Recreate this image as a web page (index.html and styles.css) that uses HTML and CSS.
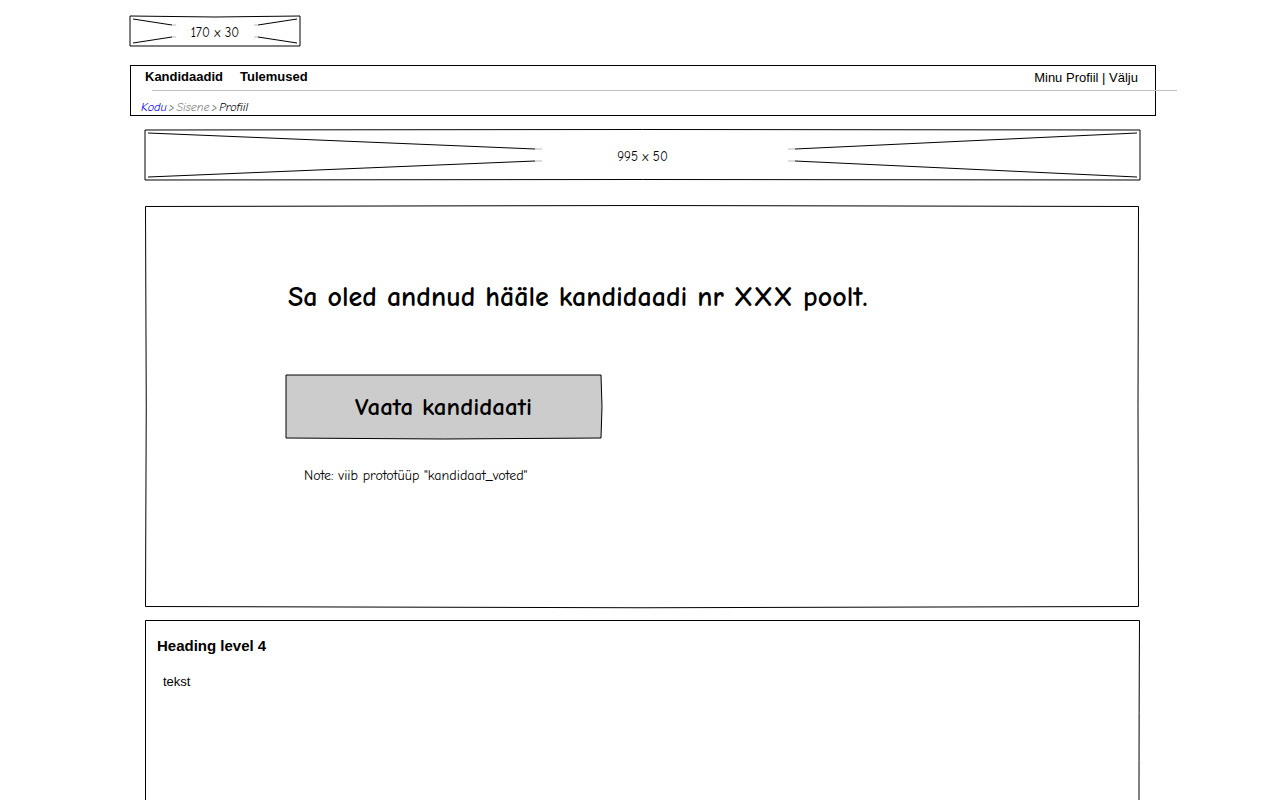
FILE: index.html
```html
<!DOCTYPE html>
<html lang="et">
<head>
<meta charset="utf-8">
<title>Profiil</title>
<link rel="stylesheet" href="styles.css">
</head>
<body>
<div class="page">
  <div class="placeholder logo">
    <svg class="sketch" viewBox="0 0 170 30" preserveAspectRatio="none" aria-hidden="true">
      <path d="M0 0Q85 2 170 0V30H0ZM3 3L42 9M3 27L42 21M128 9L167 3M128 21L167 27"/>
      <path class="faint" d="M42 9H46M42 21H46M124 9H128M124 21H128"/>
    </svg>
    <span class="size-label">170 x 30</span>
  </div>

  <header class="header">
    <div class="topbar">
      <nav class="menu">
        <a href="#">Kandidaadid</a>
        <a href="#">Tulemused</a>
      </nav>
      <div class="account"><a href="#">Minu Profiil</a> | <a href="#">Välju</a></div>
    </div>
    <hr class="divider">
    <nav class="breadcrumb"><a class="home" href="#">Kodu</a><span class="sep">&gt;</span><a class="parent" href="#">Sisene</a><span class="sep">&gt;</span><span class="current">Profiil</span></nav>
  </header>

  <main class="content">
    <div class="placeholder banner">
      <svg class="sketch" viewBox="0 0 995 50" preserveAspectRatio="none" aria-hidden="true">
        <path d="M0 0Q498 -1 995 0V50Q498 49 0 50ZM3 3L390 19M3 47L390 31M650 19L992 3M650 31L992 47"/>
        <path class="faint" d="M390 19H397M390 31H397M643 19H650M643 31H650"/>
      </svg>
      <span class="size-label">995 x 50</span>
    </div>

    <section class="panel vote">
      <svg class="sketch" viewBox="0 0 994 401" preserveAspectRatio="none" aria-hidden="true">
        <path d="M.5 .5Q497 -1.5 993.5 .5Q992.500 200 993.5 400.500Q497 403 .5 400.500Q2 200 .5 .5Z"/>
      </svg>
      <h1 class="message">Sa oled andnud hääle kandidaadi nr XXX poolt.</h1>
      <button class="view-button" type="button">
        <svg class="sketch" viewBox="0 0 315 63" preserveAspectRatio="none" aria-hidden="true">
          <path class="fill" d="M0 0H315Q317 32 315 63Q158 65 0 63Z"/>
        </svg>
        <span class="button-label">Vaata kandidaati</span>
      </button>
      <p class="note">Note: viib prototüüp "kandidaat_voted"</p>
    </section>

    <section class="panel details">
      <svg class="sketch" viewBox="0 0 995 180" preserveAspectRatio="none" aria-hidden="true">
        <path d="M.5 190V.5H994.5Q994 90 994 190"/>
      </svg>
      <h4 class="heading">Heading level 4</h4>
      <p class="text">tekst</p>
    </section>
  </main>
</div>
</body>
</html>
```
FILE: styles.css
```css
* { box-sizing: border-box; }

body {
  margin: 0;
  background: #fff;
  color: #000;
  font: 13px/16px "Liberation Sans", Arial, sans-serif;
}

a { color: inherit; text-decoration: none; }

h1, h4, p { margin: 0; }

.page {
  display: flex;
  flex-direction: column;
  height: 100vh;
  min-height: 720px;
  padding: 16px 124px 0 130px;
  overflow: hidden;
}

.sketch {
  position: absolute;
  inset: 0;
  width: 100%;
  height: 100%;
  overflow: visible;
  fill: none;
  stroke: #000;
  pointer-events: none;
}

.sketch path { vector-effect: non-scaling-stroke; }
.sketch .fill { fill: #ccc; }
.sketch .faint { stroke: #bbb; }

.placeholder {
  position: relative;
  display: flex;
  flex: none;
  align-items: center;
  justify-content: center;
}

.logo { width: 170px; height: 30px; }
.banner { height: 50px; }

.size-label, .breadcrumb, .message, .view-button, .note {
  font-family: "Comic Sans MS", "Comic Neue", "Open Sans", sans-serif;
}

.message, .view-button { font-weight: bold; }

.size-label { font-size: 13px; padding-top: 3px; }

.header {
  flex: none;
  height: 51px;
  margin-top: 19px;
  border: 1px solid #000;
}

.topbar {
  display: flex;
  justify-content: space-between;
  padding: 3px 17px 0 14px;
}

.menu { display: flex; gap: 17px; font-weight: bold; font-size: 13px; }
.account { padding-top: 1px; }

.divider {
  height: 1px;
  margin: 4px -22px 0 21px;
  border: 0;
  background: #c0c0c0;
}

.breadcrumb {
  display: flex;
  gap: 2px;
  width: 114px;
  margin: 8px 0 0 10px;
  overflow: hidden;
  font-size: 12px;
  font-style: italic;
  white-space: nowrap;
}

.home { color: #00f; }
.parent { color: #888; }
.sep { color: #666; }

.content {
  display: flex;
  flex: 1;
  flex-direction: column;
  min-height: 0;
  padding: 14px 16px 0 15px;
}

.panel { position: relative; }

.vote {
  flex: none;
  height: 401px;
  margin: 26px 1px 0 0;
  padding: 72px 32px 0 141px;
}

.message {
  padding-left: 2px;
  font-size: 28px;
  line-height: 38px;
}

.view-button {
  position: relative;
  display: block;
  width: 315px;
  height: 63px;
  margin-top: 59px;
  padding: 0;
  border: 0;
  background: none;
  color: #000;
  font-size: 25px;
}

.button-label { position: relative; }

.note {
  margin-top: 30px;
  padding-left: 18px;
  font-size: 14px;
}

.details {
  flex: 1;
  margin-top: 13px;
  padding: 17px 12px 0;
}

.heading { font-size: 15px; line-height: 18px; }

.text {
  width: 28px;
  margin: 19px 0 0 6px;
  overflow: hidden;
}
```
